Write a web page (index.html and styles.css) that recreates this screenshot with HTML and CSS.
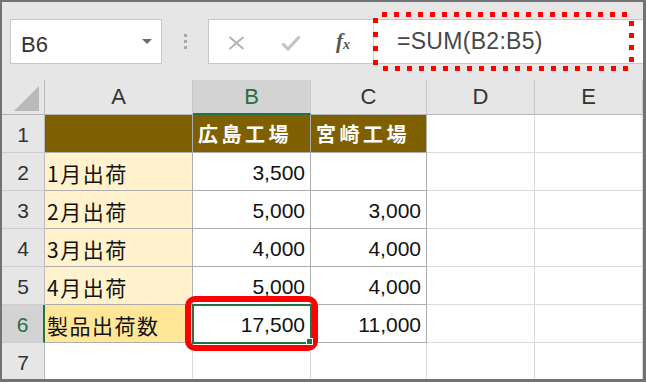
FILE: index.html
```html
<!DOCTYPE html>
<html lang="ja">
<head>
  <meta charset="UTF-8">
  <title>SUM</title>
  <link rel="stylesheet" href="styles.css">
</head>
<body>
  <div class="frame">

    <!-- Name box + formula bar -->
    <div class="toolbar">
      <div class="namebox">
        <span>B6</span>
        <span class="arrow"></span>
      </div>
      <div class="grip"><i></i><i></i><i></i></div>
      <div class="fxbar">
        <div class="fxicons">
          <svg class="ico-x" width="17" height="14" viewBox="0 0 17 14">
            <path d="M1.5 1 L15.5 13 M15.5 1 L1.5 13" stroke="#b3b3b3" stroke-width="2" fill="none"/>
          </svg>
          <svg class="ico-ok" width="20" height="16" viewBox="0 0 20 16">
            <path d="M1.5 8.5 L7 14 L18.5 1.5" stroke="#c2c2c2" stroke-width="3" fill="none"/>
          </svg>
          <span class="fx"><i>f</i><sub>x</sub></span>
        </div>
        <div class="fxinput">=SUM(B2:B5)</div>
      </div>
      <div class="callout-dots"></div>
    </div>

    <!-- Sheet -->
    <div class="sheet">
      <div class="cell ch corner">
        <svg width="26" height="26" viewBox="0 0 26 26"><polygon points="0,25 25,0 25,25" fill="#b9b9b9"/></svg>
      </div>
      <div class="cell ch">A</div>
      <div class="cell ch sel">B</div>
      <div class="cell ch">C</div>
      <div class="cell ch">D</div>
      <div class="cell ch">E</div>

      <div class="cell rh">1</div>
      <div class="cell tbl head"></div>
      <div class="cell tbl head">広島工場</div>
      <div class="cell tbl head">宮崎工場</div>
      <div class="cell"></div>
      <div class="cell"></div>

      <div class="cell rh">2</div>
      <div class="cell tbl label">1月出荷</div>
      <div class="cell tbl num">3,500</div>
      <div class="cell tbl num"></div>
      <div class="cell"></div>
      <div class="cell"></div>

      <div class="cell rh">3</div>
      <div class="cell tbl label">2月出荷</div>
      <div class="cell tbl num">5,000</div>
      <div class="cell tbl num">3,000</div>
      <div class="cell"></div>
      <div class="cell"></div>

      <div class="cell rh">4</div>
      <div class="cell tbl label">3月出荷</div>
      <div class="cell tbl num">4,000</div>
      <div class="cell tbl num">4,000</div>
      <div class="cell"></div>
      <div class="cell"></div>

      <div class="cell rh">5</div>
      <div class="cell tbl label">4月出荷</div>
      <div class="cell tbl num">5,000</div>
      <div class="cell tbl num">4,000</div>
      <div class="cell"></div>
      <div class="cell"></div>

      <div class="cell rh sel-row">6</div>
      <div class="cell tbl label total">製品出荷数</div>
      <div class="cell tbl num active">17,500<span class="callout-box"></span></div>
      <div class="cell tbl num">11,000</div>
      <div class="cell"></div>
      <div class="cell"></div>

      <div class="cell rh">7</div>
      <div class="cell"></div>
      <div class="cell"></div>
      <div class="cell"></div>
      <div class="cell"></div>
      <div class="cell"></div>
    </div>

  </div>
</body>
</html>
```

FILE: styles.css
```css
/* General */
body {
  margin: 0;
  background: #fff;
  font-family: 'Liberation Sans', 'Noto Sans CJK JP', sans-serif;
}

.frame {
  width: 646px;
  height: 382px;
  box-sizing: border-box;
  border-style: solid;
  border-color: #727272;
  border-width: 2px 3px 3px 2px;
  background-color: #e6e6e6;
  overflow: hidden;
}

/* Toolbar */
.toolbar {
  position: relative;
  height: 78px;
  display: flex;
  align-items: flex-start;
  padding: 17px 0 0 8px;
  box-sizing: border-box;
}

.namebox {
  width: 152px;
  height: 45px;
  box-sizing: border-box;
  border: 1px solid #c6c6c6;
  background-color: #fff;
  display: flex;
  align-items: center;
  justify-content: space-between;
  padding: 6px 9px 0 10px;
  font-size: 22px;
  color: #333;
}

.arrow {
  width: 0;
  height: 0;
  border-left: 5px solid transparent;
  border-right: 5px solid transparent;
  border-top: 5px solid #6b6b6b;
  margin-top: -6px;
}

.grip {
  width: 46px;
  height: 45px;
  display: flex;
  flex-direction: column;
  align-items: center;
  justify-content: center;
  gap: 3px;
}

.grip i {
  width: 3px;
  height: 3px;
  background-color: #a8a8a8;
}

.fxbar {
  flex: 1;
  height: 45px;
  box-sizing: border-box;
  border: 1px solid #c6c6c6;
  border-right: none;
  background-color: #fff;
  display: flex;
}

.fxicons {
  width: 165px;
  box-sizing: border-box;
  border-right: 1px solid #d4d4d4;
  display: flex;
  align-items: center;
  padding-left: 19px;
}

.ico-x {
  margin-top: 3px;
}

.ico-ok {
  margin-left: 36px;
  margin-top: 3px;
}

.fx {
  margin-left: 35px;
  font-family: 'Liberation Serif', serif;
  font-weight: bold;
  color: #555;
  font-size: 21px;
}

.fx sub {
  font-size: 14px;
  font-style: italic;
  vertical-align: -1px;
}

.fxinput {
  padding-left: 23px;
  display: flex;
  align-items: center;
  font-size: 23px;
  color: #474747;
  letter-spacing: 0.3px;
}

/* Red dotted annotation over the formula */
.callout-dots {
  position: absolute;
  left: 371px;
  top: 10px;
  width: 261px;
  height: 59px;
  background:
    repeating-linear-gradient(90deg, #f00 0 5px, transparent 5px 12px) 9px 0 / 246px 5px no-repeat,
    repeating-linear-gradient(90deg, #f00 0 5px, transparent 5px 12px) 10px 100% / 246px 5px no-repeat,
    repeating-linear-gradient(180deg, #f00 0 5px, transparent 5px 14px) 0 6px / 5px 47px no-repeat,
    repeating-linear-gradient(180deg, #f00 0 5px, transparent 5px 12px) 100% 9px / 5px 41px no-repeat;
}

/* Sheet grid */
.sheet {
  display: grid;
  grid-template-columns: 43px 148px 118px 116px 108px 108px;
  grid-template-rows: 35px repeat(7, 38px);
}

.cell {
  position: relative;
  box-sizing: border-box;
  border-right: 1px solid #dadada;
  border-bottom: 1px solid #dadada;
  background-color: #fff;
  display: flex;
  align-items: flex-end;
  padding: 0 5px 5px 2px;
  font-size: 21px;
  line-height: 24px;
  color: #111;
  white-space: nowrap;
}

.ch {
  background-color: #e6e6e6;
  border-right-color: #c8c8c8;
  border-bottom-color: #b4b4b4;
  align-items: center;
  justify-content: center;
  padding: 0;
  font-size: 22px;
  color: #333;
}

.ch.sel {
  background-color: #d3d3d3;
  border-bottom: 2px solid #217346;
  color: #2b6b4a;
}

.corner {
  border-right-color: #bcbcbc;
  align-items: flex-end;
  justify-content: flex-end;
  padding: 0 4px 2px 0;
}

.corner svg {
  display: block;
}

.rh {
  background-color: #e6e6e6;
  border-right-color: #bcbcbc;
  border-bottom-color: #cdcdcd;
  justify-content: center;
  padding: 0 0 5px 0;
  color: #333;
}

.rh.sel-row {
  background-color: #d3d3d3;
  border-right: 2px solid #217346;
  color: #2b6b4a;
}

.tbl {
  border-right-color: #aeaeae;
  border-bottom-color: #aeaeae;
}

.head {
  background-color: #7f6000;
  color: #fff;
  font-family: 'Noto Sans CJK JP', sans-serif;
  font-weight: bold;
  font-size: 20px;
  letter-spacing: 3.5px;
  padding-left: 5px;
  padding-bottom: 6px;
}

.label {
  background-color: #fff2cc;
  font-family: 'Noto Sans CJK JP', sans-serif;
  letter-spacing: 1.5px;
}

.label.total {
  background-color: #ffe699;
}

.num {
  justify-content: flex-end;
}

/* Active cell */
.active {
  outline: 2px solid #217346;
  outline-offset: -1px;
  z-index: 2;
}

.active::after {
  content: '';
  position: absolute;
  right: -3px;
  bottom: -3px;
  width: 5px;
  height: 5px;
  background-color: #217346;
  border: 1px solid #fff;
}

/* Red annotation around B6 */
.callout-box {
  position: absolute;
  left: -8px;
  top: -9px;
  width: 133px;
  height: 55px;
  box-sizing: border-box;
  border: 6px solid #f00;
  border-radius: 10px;
}
```
